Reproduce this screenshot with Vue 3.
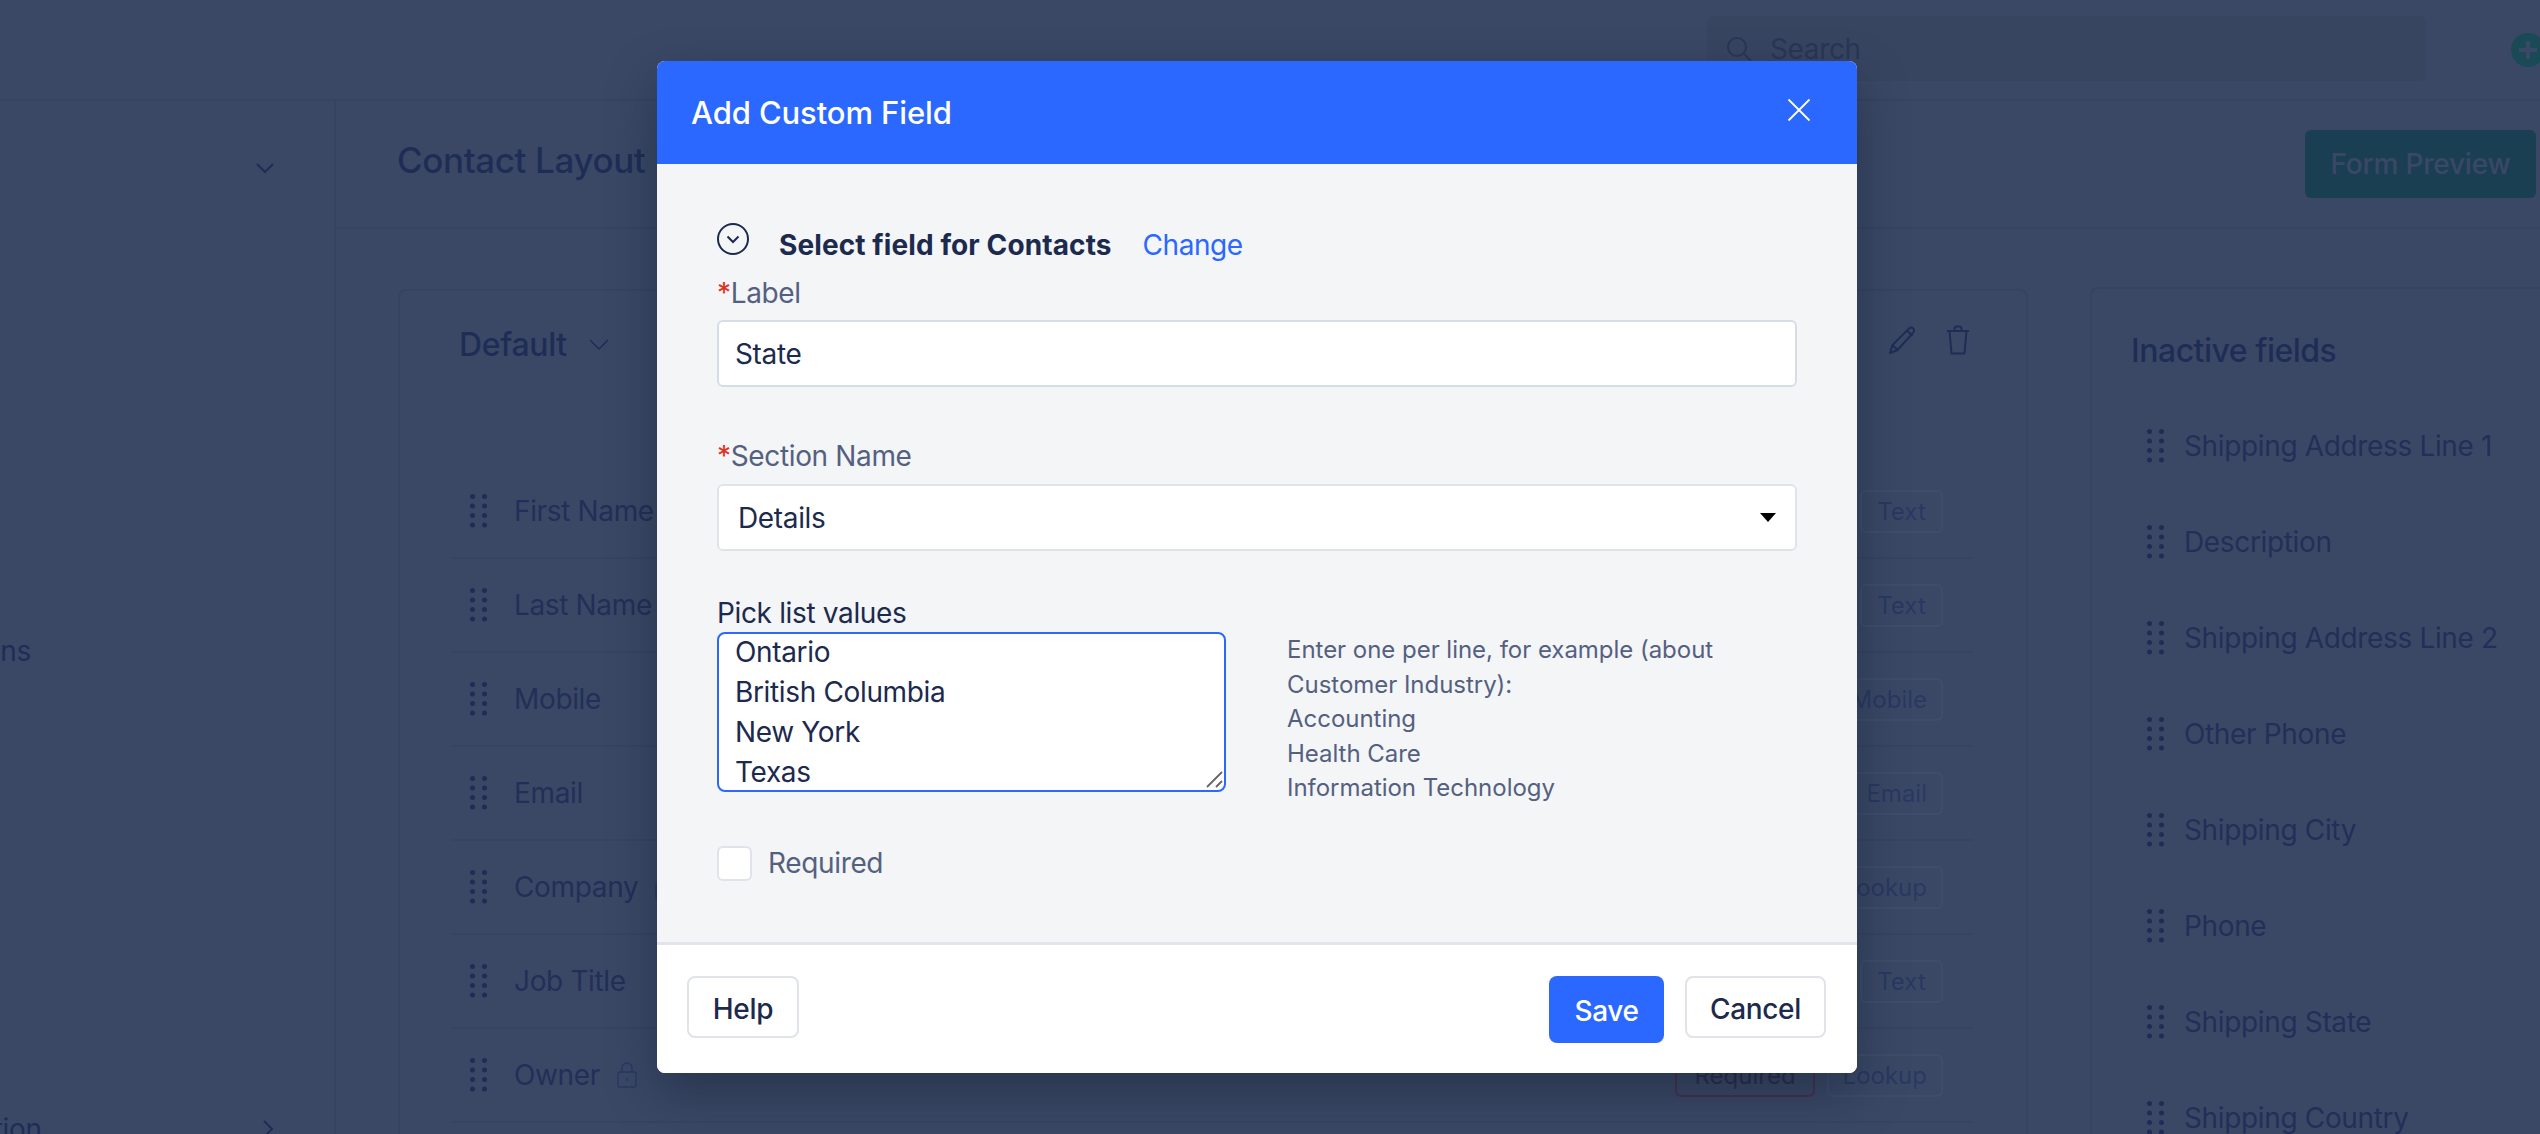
<script setup>
import { onMounted, ref } from 'vue'
const activeRows = [
  { name: 'First Name', tag: 'Text' },
  { name: 'Last Name', tag: 'Text' },
  { name: 'Mobile', tag: 'Mobile' },
  { name: 'Email', tag: 'Email' },
  { name: 'Company', tag: 'Lookup', lock: true },
  { name: 'Job Title', tag: 'Text' },
  { name: 'Owner', tag: 'Lookup', lock: true, required: true }
]
const inactive = ['Shipping Address Line 1', 'Description', 'Shipping Address Line 2', 'Other Phone', 'Shipping City', 'Phone', 'Shipping State', 'Shipping Country']
const picklist = 'Ontario\nBritish Columbia\nNew York\nTexas'
const dots = []
for (const y of [2.5, 12, 21.5, 31]) for (const x of [2.5, 14.5]) dots.push({ x, y })
const area = ref(null)
onMounted(() => { area.value.scrollTop = 2 })
</script>

<template>
  <div class="page">
    <header class="topbar">
      <div class="search">
        <svg class="search-icon" width="28" height="28" viewBox="0 0 28 28" fill="none" stroke="#2a3657" stroke-width="2"><circle cx="12" cy="12" r="9"/><path d="M19 19l7 7"/></svg>
        <span>Search</span>
      </div>
      <div class="plus"><span></span></div>
    </header>
    <div class="main">
      <aside class="sidebar">
        <div class="side-head">
          <svg width="20" height="12" viewBox="0 0 20 12" fill="none" stroke="#1f2d56" stroke-width="2"><path d="M2 2l8 8 8-8"/></svg>
        </div>
        <div class="side-item first"><span>Actions</span></div>
        <div class="side-item second"><span>Automation</span>
          <svg width="12" height="20" viewBox="0 0 12 20" fill="none" stroke="#1f2d56" stroke-width="2"><path d="M2 2l8 8-8 8"/></svg>
        </div>
      </aside>
      <section class="content">
        <div class="content-head">
          <h1>Contact Layout</h1>
          <button class="preview">Form Preview</button>
        </div>
        <div class="panels">
          <div class="card">
            <div class="card-head">
              <span class="card-title">Default</span>
              <svg width="20" height="12" viewBox="0 0 20 12" fill="none" stroke="#1f2d56" stroke-width="1.5"><path d="M1 1l9 9 9-9"/></svg>
              <div class="card-tools">
                <svg width="30" height="30" viewBox="0 0 30 30" fill="none" stroke="#1f2d56" stroke-width="2" stroke-linejoin="round"><path d="M2 28l2.500-8L21 3.500c1.200-1.200 3-1.200 4.200 0s1.200 3 0 4.200L9.500 25z"/><path d="M4.500 20l5 5M19 5.500l5.500 5.500"/></svg>
                <svg width="24" height="30" viewBox="0 0 24 30" fill="none" stroke="#1f2d56" stroke-width="2" stroke-linejoin="round"><path d="M1 6h22M8.500 6V4c0-1.500 1-2.500 2-2.500h3c1 0 2 1 2 2.500v2M3.500 6l2 22.500h13l2-22.500"/></svg>
              </div>
            </div>
            <div v-for="r in activeRows" :key="r.name" class="row">
              <svg class="grip" width="17" height="34" viewBox="0 0 17 34" fill="#1f2d56"><circle v-for="(d, i) in dots" :key="i" :cx="d.x" :cy="d.y" r="2.500"/></svg>
              <span class="row-name">{{ r.name }}</span>
              <svg v-if="r.lock" class="lock" width="20" height="26" viewBox="0 0 20 26" fill="none" stroke="#2a3862" stroke-width="1.500"><rect x="1" y="10" width="18" height="15" rx="2"/><path d="M5 10V6a5 5 0 0 1 10 0v4M10 15.500v3.500"/></svg>
              <span class="spacer"></span>
              <span v-if="r.required" class="tag tag-req">Required</span>
              <span class="tag">{{ r.tag }}</span>
            </div>
          </div>
          <div class="inactive">
            <h2>Inactive fields</h2>
            <div v-for="n in inactive" :key="n" class="inactive-row">
              <svg class="grip" width="17" height="34" viewBox="0 0 17 34" fill="#1f2d56"><circle v-for="(d, i) in dots" :key="i" :cx="d.x" :cy="d.y" r="2.500"/></svg>
              <span class="row-name">{{ n }}</span>
            </div>
          </div>
        </div>
      </section>
    </div>

    <div class="overlay">
      <div class="modal">
        <div class="modal-head">
          <span>Add Custom Field</span>
          <svg width="24" height="24" viewBox="0 0 24 24" fill="none" stroke="#fff" stroke-width="1.800"><path d="M1.500 1.500l21 21M22.500 1.500l-21 21"/></svg>
        </div>
        <div class="modal-body">
          <div class="select-line">
            <svg width="32" height="32" viewBox="0 0 32 32" fill="none" stroke="#1c2a4e" stroke-width="2"><circle cx="16" cy="16" r="15"/><path d="M10.500 13.500l5.500 5.500 5.500-5.500"/></svg>
            <strong>Select field for Contacts</strong>
            <a>Change</a>
          </div>
          <label class="lbl"><i>*</i>Label</label>
          <input class="field" value="State" />
          <label class="lbl lbl-sec"><i>*</i>Section Name</label>
          <div class="field select-box">
            <span>Details</span>
            <b class="caret"></b>
          </div>
          <div class="pick-label">Pick list values</div>
          <div class="pick">
            <div class="area-wrap">
              <textarea ref="area" class="area" :value="picklist"></textarea>
              <svg class="grabber" width="18" height="18" viewBox="0 0 18 18" fill="none" stroke="#666" stroke-width="1.800"><path d="M1 16L16 1M10 16l6-6"/></svg>
            </div>
            <div class="hint">
              <div>Enter one per line, for example (about</div>
              <div>Customer Industry):</div>
              <div>Accounting</div>
              <div>Health Care</div>
              <div>Information Technology</div>
            </div>
          </div>
          <div class="check">
            <span class="box"></span>
            <span>Required</span>
          </div>
        </div>
        <div class="modal-foot">
          <button class="btn">Help</button>
          <div class="foot-right">
            <button class="btn primary">Save</button>
            <button class="btn cancel">Cancel</button>
          </div>
        </div>
      </div>
    </div>
  </div>
</template>

<style>
html, body { margin: 0; overflow: hidden; background: #3a4866; }
</style>

<style scoped>
* { box-sizing: border-box; }
.page {
  position: relative;
  width: 2540px;
  height: 1134px;
  overflow: hidden;
  background: #3a4866;
  color: #1f2d56;
  font-family: Inter, "Liberation Sans", sans-serif;
  font-size: 28px;
  letter-spacing: -0.35px;
}
.topbar {
  height: 101px;
  border-bottom: 2px solid #37445f;
  display: flex;
  align-items: flex-start;
  padding: 16px 0 0 1707px;
}
.search {
  width: 719px;
  height: 65px;
  flex: none;
  background: #384561;
  border-radius: 6px;
  display: flex;
  align-items: center;
  gap: 17px;
  padding-left: 18px;
  color: #2a3657;
}
.search-icon { flex: none; }
.plus {
  width: 34px;
  height: 34px;
  margin: 17px 0 0 85px;
  flex: none;
  border-radius: 50%;
  background: #1a4a55;
  position: relative;
}
.plus span { position: absolute; left: 8px; top: 15px; width: 18px; height: 4px; background: #3a4866; }
.plus span::after { content: ""; position: absolute; left: 7px; top: -7px; width: 4px; height: 18px; background: #3a4866; }
.main { display: flex; height: 1033px; }
.sidebar {
  width: 336px;
  flex: none;
  border-right: 2px solid #37445f;
  display: flex;
  flex-direction: column;
}
.side-head { height: 73px; flex: none; display: flex; align-items: flex-end; justify-content: flex-end; padding-right: 59px; }
.side-item { display: flex; flex: none; justify-content: space-between; align-items: center; height: 40px; }
.side-item.first { margin-top: 457px; margin-left: -66px; }
.side-item.second { margin-top: 438px; margin-left: -106px; padding-right: 60px; }
.content { flex: 1; min-width: 0; }
.content-head {
  height: 128px;
  border-bottom: 2px solid #37445f;
  display: flex;
  align-items: center;
  justify-content: space-between;
  padding: 0 4px 0 61px;
}
h1 { margin: -8px 0 0; font-size: 35px; font-weight: 500; letter-spacing: -0.4px; color: #1f2d56; }
.preview {
  width: 231px;
  height: 68px;
  background: #1a3f52;
  color: #3a4866;
  border: none;
  border-radius: 6px;
  font: 500 28px Inter, "Liberation Sans", sans-serif;
  letter-spacing: -0.2px;
}
.panels { display: flex; align-items: flex-start; padding: 60px 0 0 62px; gap: 62px; }
.card {
  width: 1630px;
  height: 1000px;
  flex: none;
  border: 2px solid #37445f;
  border-radius: 8px;
  padding: 0 53px 0 51px;
}
.card-head {
  height: 174px;
  display: flex;
  align-items: flex-start;
  padding: 34px 0 0 8px;
  gap: 22px;
}
.card-title { font-size: 32px; font-weight: 500; }
.card-head > svg { margin-top: 14px; }
.card-tools { margin-left: auto; display: flex; gap: 28px; margin-right: 3px; }
.row {
  height: 94px;
  border-bottom: 2px solid #37445f;
  display: flex;
  align-items: center;
  padding: 0 30px 0 19px;
}
.grip { flex: none; }
.row-name { margin-left: 27px; color: #232f58; font-size: 28px; }
.lock { margin-left: 17px; }
.spacer { flex: 1; }
.tag {
  height: 43px;
  min-width: 83px;
  padding: 0 14px;
  border: 2px solid #3f4d6d;
  border-radius: 6px;
  color: #2a3862;
  font-size: 24px;
  letter-spacing: 0;
  display: flex;
  align-items: center;
  justify-content: center;
}
.tag-req { border-color: #4a2f4f; color: #2a2c50; margin-right: 12px; padding: 0 17px; }
.inactive {
  flex: 1;
  height: 1000px;
  margin-top: -2px;
  border: 2px solid #37445f;
  border-radius: 8px 0 0 8px;
  border-right: none;
  padding: 42px 0 0 39px;
  white-space: nowrap;
}
h2 { margin: 0 0 27px; font-size: 32px; font-weight: 500; line-height: 40px; letter-spacing: -0.5px; }
.inactive-row { height: 96px; display: flex; align-items: center; padding-left: 16px; }
.inactive-row .row-name { margin-left: 20px; }
.overlay { position: absolute; inset: 0; display: flex; justify-content: flex-start; padding: 61px 0 0 657px; pointer-events: none; }
.modal {
  width: 1200px;
  height: 1012px;
  flex: none;
  border-radius: 8px;
  overflow: hidden;
  background: #fff;
  box-shadow: 0 20px 50px rgba(16, 24, 40, 0.4);
  display: flex;
  flex-direction: column;
}
.modal-head {
  height: 103px;
  flex: none;
  background: #2a68ff;
  color: #fff;
  display: flex;
  align-items: center;
  justify-content: space-between;
  padding: 0 46px 0 34px;
  font-size: 31px;
  font-weight: 500;
  letter-spacing: -0.1px;
}
.modal-head svg { margin-top: -6px; }
.modal-body {
  flex: 1;
  background: #f3f5f7;
  border-bottom: 3px solid #e1e4ea;
  padding: 59px 60px 0 60px;
}
.select-line { display: flex; align-items: flex-start; height: 52px; }
.select-line strong { margin: 4px 0 0 30px; font-weight: 700; letter-spacing: 0.1px; color: #1c2a4e; line-height: 36px; }
.select-line a { margin: 4px 0 0 31px; color: #2a68ff; line-height: 36px; letter-spacing: -0.45px; }
.lbl { display: block; color: #556080; line-height: 36px; height: 36px; margin-bottom: 9px; }
.lbl i { color: #e0301e; font-style: normal; }
.lbl-sec { margin-top: 51px; margin-bottom: 10px; }
.field {
  display: block;
  width: 100%;
  height: 67px;
  border: 2px solid #d5dee8;
  border-radius: 6px;
  background: #fff;
  padding: 0 16px;
  font: 28px Inter, "Liberation Sans", sans-serif;
  letter-spacing: -0.35px;
  color: #1c2a4e;
  outline: none;
}
.select-box {
  display: flex;
  align-items: center;
  justify-content: space-between;
  border-color: #e0e3ea;
  padding: 0 19px 0 19px;
}
.caret { width: 0; height: 0; border-left: 8px solid transparent; border-right: 8px solid transparent; border-top: 9px solid #000; }
.pick-label { margin-top: 44px; color: #1c2a4e; line-height: 36px; height: 36px; }
.pick { display: flex; margin-top: 1px; }
.area-wrap { position: relative; width: 509px; height: 160px; flex: none; }
.area {
  display: block;
  width: 509px;
  height: 160px;
  border: 2px solid #2a68ff;
  border-radius: 8px;
  padding: 0 16px 6px;
  font: 28px/40px Inter, "Liberation Sans", sans-serif;
  letter-spacing: -0.35px;
  color: #1c2a4e;
  background: #fff;
  outline: none;
  overflow: hidden;
  resize: none;
}
.grabber { position: absolute; right: 2px; bottom: 3px; }
.hint { margin-left: 61px; color: #556080; font-size: 24px; letter-spacing: -0.03px; line-height: 34.500px; padding-top: 1px; }
.check { display: flex; align-items: center; margin-top: 40px; gap: 16px; color: #556080; }
.box { width: 35px; height: 35px; border: 2px solid #e0e3ea; border-radius: 6px; background: #fff; }
.modal-foot {
  height: 128px;
  flex: none;
  background: #fff;
  display: flex;
  align-items: flex-start;
  justify-content: space-between;
  padding: 31px 31px 0 30px;
}
.foot-right { display: flex; align-items: flex-start; gap: 21px; }
.btn {
  height: 62px;
  width: 112px;
  padding: 3px 0 0;
  border: 2px solid #e0e3ea;
  border-radius: 8px;
  background: #fff;
  color: #1c2a4e;
  font: 500 28px Inter, "Liberation Sans", sans-serif;
  letter-spacing: -0.35px;
}
.primary { height: 67px; width: 115px; background: #2a68ff; border: none; color: #fff; }
.cancel { width: 141px; }
</style>
